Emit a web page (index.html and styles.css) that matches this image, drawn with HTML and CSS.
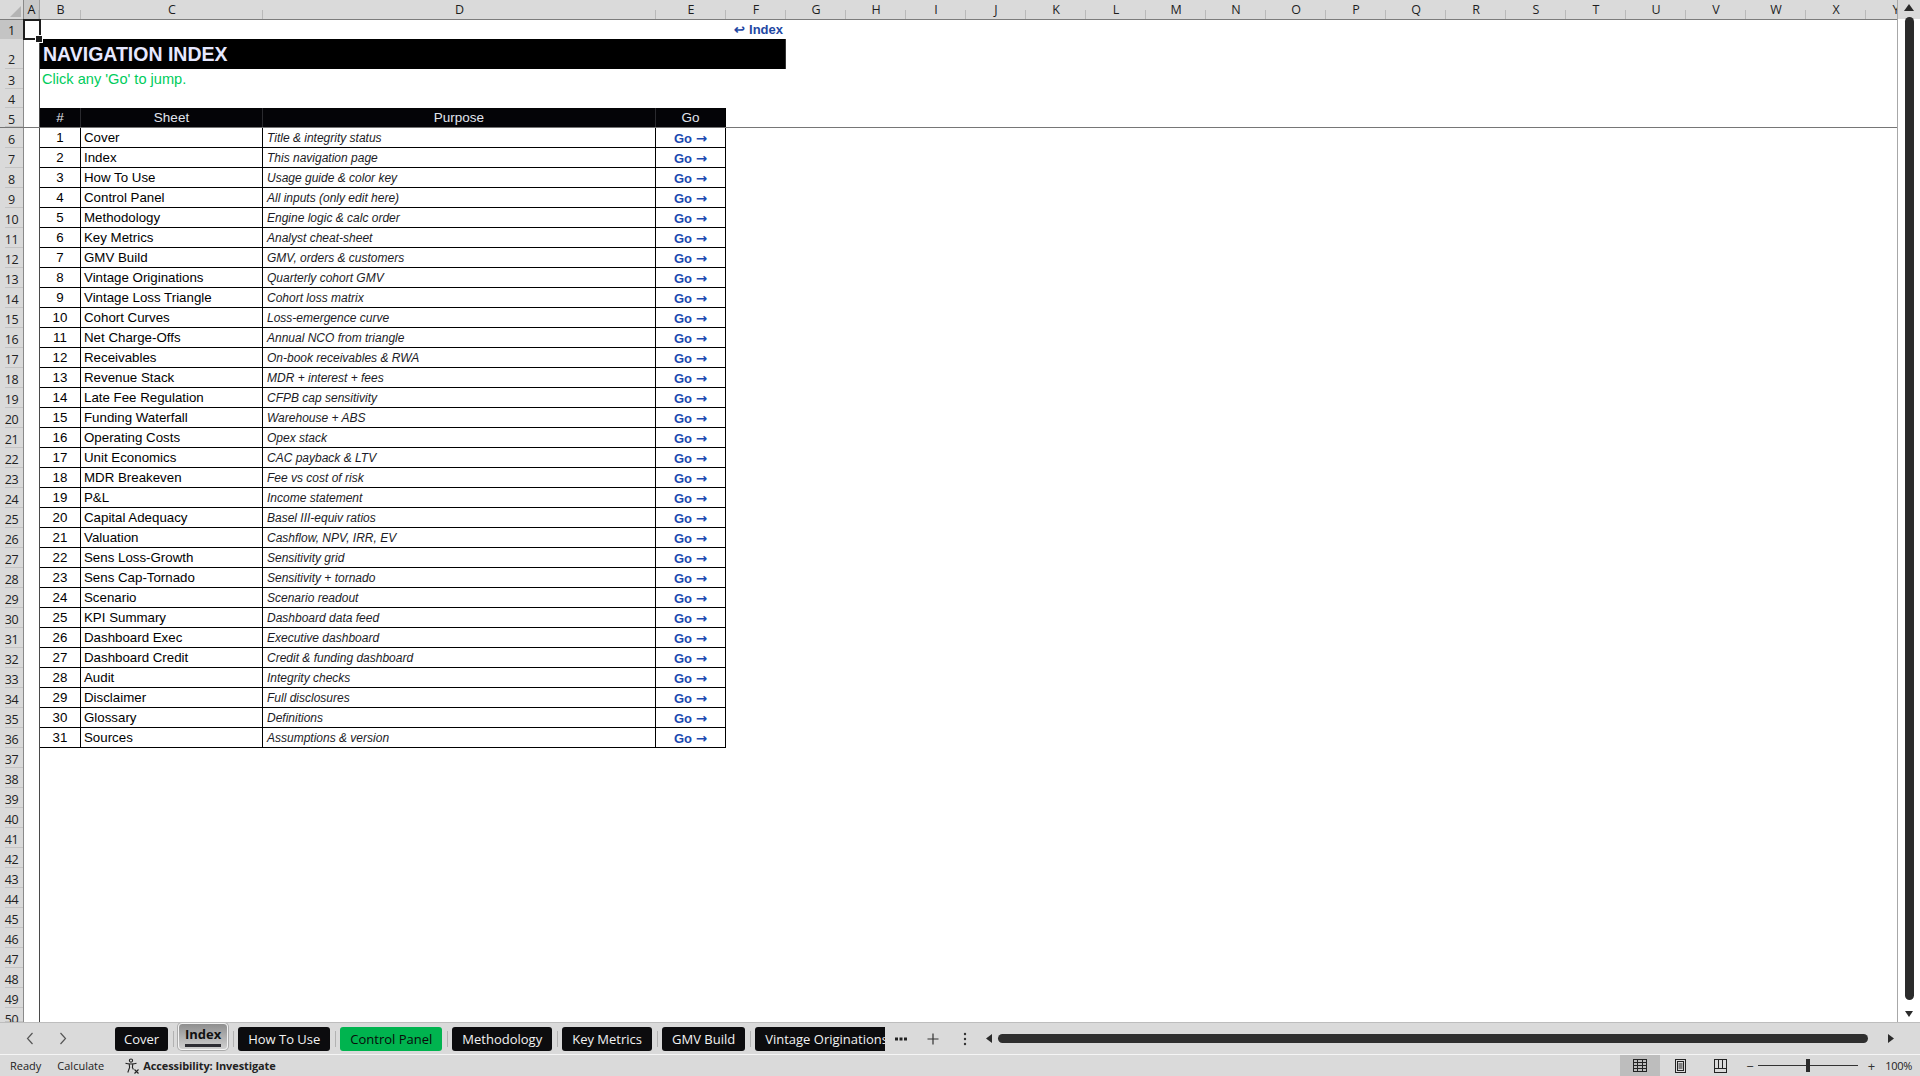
FILE: index.html
```html
<!DOCTYPE html>
<html lang="en">
<head>
<meta charset="utf-8">
<title>Navigation Index</title>
<link rel="stylesheet" href="styles.css">
</head>
<body>
<div class="app">
  <div class="main">
    <div class="sheet">
      <div class="colhdr">
        <div class="ch corner"><svg width="24" height="19" viewBox="0 0 24 19"><polygon points="10,17 21,17 21,6" fill="#b4b4b4"/></svg></div>
        <div class="ch w-a selcol">A</div>
        <div class="ch w-b">B</div>
        <div class="ch w-c">C</div>
        <div class="ch w-d">D</div>
        <div class="ch w-e">E</div>
        <div class="ch w-x">F</div><div class="ch w-x">G</div><div class="ch w-x">H</div><div class="ch w-x">I</div><div class="ch w-x">J</div>
        <div class="ch w-x">K</div><div class="ch w-x">L</div><div class="ch w-x">M</div><div class="ch w-x">N</div><div class="ch w-x">O</div>
        <div class="ch w-x">P</div><div class="ch w-x">Q</div><div class="ch w-x">R</div><div class="ch w-x">S</div><div class="ch w-x">T</div>
        <div class="ch w-x">U</div><div class="ch w-x">V</div><div class="ch w-x">W</div><div class="ch w-x">X</div><div class="ch w-x">Y</div>
      </div>

      <div class="r h19"><div class="rn selrow">1</div><div class="ca sel"></div><div class="backlink">↩ Index</div></div>
      <div class="r h30"><div class="rn rn-bottom">2</div><div class="ca"></div><div class="title">NAVIGATION INDEX</div></div>
      <div class="r"><div class="rn">3</div><div class="ca"></div><div class="hint">Click any 'Go' to jump.</div></div>
      <div class="r h19"><div class="rn">4</div><div class="ca"></div></div>
      <div class="r freeze"><div class="rn">5</div><div class="ca"></div><div class="hd w-b">#</div><div class="hd w-c">Sheet</div><div class="hd w-d">Purpose</div><div class="hd w-e last">Go</div></div>

      <div class="r"><div class="rn">6</div><div class="ca"></div><div class="t num">1</div><div class="t nm">Cover</div><div class="t pp">Title &amp; integrity status</div><div class="t go">Go <span class="arr">→</span></div></div>
      <div class="r"><div class="rn">7</div><div class="ca"></div><div class="t num">2</div><div class="t nm">Index</div><div class="t pp">This navigation page</div><div class="t go">Go <span class="arr">→</span></div></div>
      <div class="r"><div class="rn">8</div><div class="ca"></div><div class="t num">3</div><div class="t nm">How To Use</div><div class="t pp">Usage guide &amp; color key</div><div class="t go">Go <span class="arr">→</span></div></div>
      <div class="r"><div class="rn">9</div><div class="ca"></div><div class="t num">4</div><div class="t nm">Control Panel</div><div class="t pp">All inputs (only edit here)</div><div class="t go">Go <span class="arr">→</span></div></div>
      <div class="r"><div class="rn">10</div><div class="ca"></div><div class="t num">5</div><div class="t nm">Methodology</div><div class="t pp">Engine logic &amp; calc order</div><div class="t go">Go <span class="arr">→</span></div></div>
      <div class="r"><div class="rn">11</div><div class="ca"></div><div class="t num">6</div><div class="t nm">Key Metrics</div><div class="t pp">Analyst cheat-sheet</div><div class="t go">Go <span class="arr">→</span></div></div>
      <div class="r"><div class="rn">12</div><div class="ca"></div><div class="t num">7</div><div class="t nm">GMV Build</div><div class="t pp">GMV, orders &amp; customers</div><div class="t go">Go <span class="arr">→</span></div></div>
      <div class="r"><div class="rn">13</div><div class="ca"></div><div class="t num">8</div><div class="t nm">Vintage Originations</div><div class="t pp">Quarterly cohort GMV</div><div class="t go">Go <span class="arr">→</span></div></div>
      <div class="r"><div class="rn">14</div><div class="ca"></div><div class="t num">9</div><div class="t nm">Vintage Loss Triangle</div><div class="t pp">Cohort loss matrix</div><div class="t go">Go <span class="arr">→</span></div></div>
      <div class="r"><div class="rn">15</div><div class="ca"></div><div class="t num">10</div><div class="t nm">Cohort Curves</div><div class="t pp">Loss-emergence curve</div><div class="t go">Go <span class="arr">→</span></div></div>
      <div class="r"><div class="rn">16</div><div class="ca"></div><div class="t num">11</div><div class="t nm">Net Charge-Offs</div><div class="t pp">Annual NCO from triangle</div><div class="t go">Go <span class="arr">→</span></div></div>
      <div class="r"><div class="rn">17</div><div class="ca"></div><div class="t num">12</div><div class="t nm">Receivables</div><div class="t pp">On-book receivables &amp; RWA</div><div class="t go">Go <span class="arr">→</span></div></div>
      <div class="r"><div class="rn">18</div><div class="ca"></div><div class="t num">13</div><div class="t nm">Revenue Stack</div><div class="t pp">MDR + interest + fees</div><div class="t go">Go <span class="arr">→</span></div></div>
      <div class="r"><div class="rn">19</div><div class="ca"></div><div class="t num">14</div><div class="t nm">Late Fee Regulation</div><div class="t pp">CFPB cap sensitivity</div><div class="t go">Go <span class="arr">→</span></div></div>
      <div class="r"><div class="rn">20</div><div class="ca"></div><div class="t num">15</div><div class="t nm">Funding Waterfall</div><div class="t pp">Warehouse + ABS</div><div class="t go">Go <span class="arr">→</span></div></div>
      <div class="r"><div class="rn">21</div><div class="ca"></div><div class="t num">16</div><div class="t nm">Operating Costs</div><div class="t pp">Opex stack</div><div class="t go">Go <span class="arr">→</span></div></div>
      <div class="r"><div class="rn">22</div><div class="ca"></div><div class="t num">17</div><div class="t nm">Unit Economics</div><div class="t pp">CAC payback &amp; LTV</div><div class="t go">Go <span class="arr">→</span></div></div>
      <div class="r"><div class="rn">23</div><div class="ca"></div><div class="t num">18</div><div class="t nm">MDR Breakeven</div><div class="t pp">Fee vs cost of risk</div><div class="t go">Go <span class="arr">→</span></div></div>
      <div class="r"><div class="rn">24</div><div class="ca"></div><div class="t num">19</div><div class="t nm">P&amp;L</div><div class="t pp">Income statement</div><div class="t go">Go <span class="arr">→</span></div></div>
      <div class="r"><div class="rn">25</div><div class="ca"></div><div class="t num">20</div><div class="t nm">Capital Adequacy</div><div class="t pp">Basel III-equiv ratios</div><div class="t go">Go <span class="arr">→</span></div></div>
      <div class="r"><div class="rn">26</div><div class="ca"></div><div class="t num">21</div><div class="t nm">Valuation</div><div class="t pp">Cashflow, NPV, IRR, EV</div><div class="t go">Go <span class="arr">→</span></div></div>
      <div class="r"><div class="rn">27</div><div class="ca"></div><div class="t num">22</div><div class="t nm">Sens Loss-Growth</div><div class="t pp">Sensitivity grid</div><div class="t go">Go <span class="arr">→</span></div></div>
      <div class="r"><div class="rn">28</div><div class="ca"></div><div class="t num">23</div><div class="t nm">Sens Cap-Tornado</div><div class="t pp">Sensitivity + tornado</div><div class="t go">Go <span class="arr">→</span></div></div>
      <div class="r"><div class="rn">29</div><div class="ca"></div><div class="t num">24</div><div class="t nm">Scenario</div><div class="t pp">Scenario readout</div><div class="t go">Go <span class="arr">→</span></div></div>
      <div class="r"><div class="rn">30</div><div class="ca"></div><div class="t num">25</div><div class="t nm">KPI Summary</div><div class="t pp">Dashboard data feed</div><div class="t go">Go <span class="arr">→</span></div></div>
      <div class="r"><div class="rn">31</div><div class="ca"></div><div class="t num">26</div><div class="t nm">Dashboard Exec</div><div class="t pp">Executive dashboard</div><div class="t go">Go <span class="arr">→</span></div></div>
      <div class="r"><div class="rn">32</div><div class="ca"></div><div class="t num">27</div><div class="t nm">Dashboard Credit</div><div class="t pp">Credit &amp; funding dashboard</div><div class="t go">Go <span class="arr">→</span></div></div>
      <div class="r"><div class="rn">33</div><div class="ca"></div><div class="t num">28</div><div class="t nm">Audit</div><div class="t pp">Integrity checks</div><div class="t go">Go <span class="arr">→</span></div></div>
      <div class="r"><div class="rn">34</div><div class="ca"></div><div class="t num">29</div><div class="t nm">Disclaimer</div><div class="t pp">Full disclosures</div><div class="t go">Go <span class="arr">→</span></div></div>
      <div class="r"><div class="rn">35</div><div class="ca"></div><div class="t num">30</div><div class="t nm">Glossary</div><div class="t pp">Definitions</div><div class="t go">Go <span class="arr">→</span></div></div>
      <div class="r"><div class="rn">36</div><div class="ca"></div><div class="t num">31</div><div class="t nm">Sources</div><div class="t pp">Assumptions &amp; version</div><div class="t go">Go <span class="arr">→</span></div></div>

      <div class="r"><div class="rn">37</div><div class="ca"></div></div>
      <div class="r"><div class="rn">38</div><div class="ca"></div></div>
      <div class="r"><div class="rn">39</div><div class="ca"></div></div>
      <div class="r"><div class="rn">40</div><div class="ca"></div></div>
      <div class="r"><div class="rn">41</div><div class="ca"></div></div>
      <div class="r"><div class="rn">42</div><div class="ca"></div></div>
      <div class="r"><div class="rn">43</div><div class="ca"></div></div>
      <div class="r"><div class="rn">44</div><div class="ca"></div></div>
      <div class="r"><div class="rn">45</div><div class="ca"></div></div>
      <div class="r"><div class="rn">46</div><div class="ca"></div></div>
      <div class="r"><div class="rn">47</div><div class="ca"></div></div>
      <div class="r"><div class="rn">48</div><div class="ca"></div></div>
      <div class="r"><div class="rn">49</div><div class="ca"></div></div>
      <div class="r r-last"><div class="rn">50</div><div class="ca"></div></div>
    </div>
    <div class="vscroll">
      <svg class="varrow" width="10" height="7" viewBox="0 0 10 7"><polygon points="0,7 5,0 10,7" fill="#2b2b2b"/></svg>
      <div class="vthumb"></div>
      <svg class="varrow down" width="8" height="6" viewBox="0 0 8 6"><polygon points="0,0 8,0 4,6" fill="#2b2b2b"/></svg>
    </div>
  </div>

  <div class="tabbar">
    <div class="tabnav">
      <svg width="8" height="13" viewBox="0 0 8 13"><polyline points="6.5,1 1.5,6.5 6.5,12" fill="none" stroke="#555" stroke-width="1.2"/></svg>
      <svg width="8" height="13" viewBox="0 0 8 13"><polyline points="1.5,1 6.5,6.5 1.5,12" fill="none" stroke="#555" stroke-width="1.2"/></svg>
    </div>
    <div class="tabs">
      <div class="tab">Cover</div>
      <div class="tsep"></div>
      <div class="tab active"><span>Index</span></div>
      <div class="tsep"></div>
      <div class="tab">How To Use</div>
      <div class="tsep"></div>
      <div class="tab green">Control Panel</div>
      <div class="tsep"></div>
      <div class="tab">Methodology</div>
      <div class="tsep"></div>
      <div class="tab">Key Metrics</div>
      <div class="tsep"></div>
      <div class="tab">GMV Build</div>
      <div class="tsep"></div>
      <div class="tab">Vintage Originations</div>
    </div>
    <div class="tabtools">
      <span class="tt"><svg width="12" height="4" viewBox="0 0 12 4"><rect x="0" y="0.5" width="3" height="3" fill="#222"/><rect x="4.5" y="0.5" width="3" height="3" fill="#222"/><rect x="9" y="0.5" width="3" height="3" fill="#222"/></svg></span>
      <span class="tt"><svg width="12" height="12" viewBox="0 0 12 12"><path d="M6 0.5V11.5M0.5 6H11.5" stroke="#333" stroke-width="1.2"/></svg></span>
      <span class="tt"><svg width="4" height="14" viewBox="0 0 4 14"><circle cx="2" cy="2" r="1.2" fill="#333"/><circle cx="2" cy="7" r="1.2" fill="#333"/><circle cx="2" cy="12" r="1.2" fill="#333"/></svg></span>
    </div>
    <div class="hscroll">
      <svg width="6" height="9" viewBox="0 0 6 9"><polygon points="6,0 0,4.5 6,9" fill="#2b2b2b"/></svg>
      <div class="hthumb"></div>
      <svg width="6" height="9" viewBox="0 0 6 9"><polygon points="0,0 6,4.5 0,9" fill="#2b2b2b"/></svg>
    </div>
  </div>

  <div class="status">
    <span class="st-ready">Ready</span>
    <span class="st-calc">Calculate</span>
    <span class="st-acc">
      <svg width="16" height="16" viewBox="0 0 16 16" fill="none" stroke="#222" stroke-width="1.1">
        <circle cx="7" cy="2.6" r="1.6"/>
        <path d="M1.5 5.2 C4 6.2 10 6.2 12.5 5.2"/>
        <path d="M5.2 6 L5.6 9.5 L3.8 14.5"/>
        <path d="M8.8 6 L8.4 9.5 L9.4 11.5"/>
        <path d="M10.5 11.5 L14.5 15.5 M14.5 11.5 L10.5 15.5"/>
      </svg>
      <b>Accessibility: Investigate</b>
    </span>
    <div class="st-right">
      <span class="vbtn on">
        <svg width="14" height="13" viewBox="0 0 14 13" fill="none" stroke="#222" stroke-width="1"><rect x="0.5" y="0.5" width="13" height="12"/><path d="M0.5 3.5H13.5M0.5 6.5H13.5M0.5 9.5H13.5M4.5 0.5V12.5M9.5 0.5V12.5"/></svg>
      </span>
      <span class="vbtn">
        <svg width="11" height="14" viewBox="0 0 11 14" fill="none" stroke="#222" stroke-width="1"><rect x="0.5" y="0.5" width="10" height="13"/><rect x="2.5" y="2.5" width="6" height="9"/><path d="M3.5 5H7.5M3.5 7H7.5M3.5 9H7.5"/></svg>
      </span>
      <span class="vbtn">
        <svg width="13" height="14" viewBox="0 0 13 14" fill="none" stroke="#222" stroke-width="1"><rect x="0.5" y="0.5" width="12" height="13"/><path d="M0.5 9.5H12.5M4.5 0.5V9.5M8.5 0.5V9.5"/></svg>
      </span>
      <span class="zm">−</span>
      <span class="zslider"><span class="zthumb"></span></span>
      <span class="zm">+</span>
      <span class="zpct">100%</span>
    </div>
  </div>
</div>
</body>
</html>
```

FILE: styles.css
```css
* { box-sizing: border-box; }

body {
  margin: 0;
  width: 1920px;
  height: 1076px;
  overflow: hidden;
  background: #ffffff;
  font-family: "Liberation Sans", Arial, sans-serif;
  color: #000;
}

.app {
  display: flex;
  flex-direction: column;
  height: 1076px;
}

.main {
  display: flex;
  height: 1022px;
  flex: none;
}

/* ---------- sheet ---------- */
.sheet {
  width: 1898px;
  height: 1022px;
  overflow: hidden;
  display: flex;
  flex-direction: column;
  border-right: 1px solid #a8a8a8;
}

.colhdr {
  display: flex;
  flex: none;
  height: 20px;
  background: #dadada;
  border-bottom: 1px solid #7c7c7c;
}

.ch {
  flex: none;
  height: 19px;
  line-height: 20px;
  text-align: center;
  font-family: "Open Sans", "Noto Sans", sans-serif;
  font-size: 12.5px;
  color: #1e1e1e;
  background-image: linear-gradient(#b9b9b9, #b9b9b9);
  background-size: 1px 9px;
  background-position: right bottom;
  background-repeat: no-repeat;
}

.corner {
  width: 24px;
  border-right: 1px solid #8a8a8a;
  background-image: none;
}
.corner svg { display: block; }

.w-a { width: 16px; }
.w-b { width: 41px; }
.w-c { width: 182px; }
.w-d { width: 393px; }
.w-e { width: 70px; }
.w-x { width: 60px; }

.selcol {
  background-color: #c9c9c9;
  color: #111;
  border-right: 1px solid #a0a0a0;
}

.r {
  display: flex;
  flex: none;
  height: 20px;
}
.r.h19 { height: 19px; }
.r.h30 { height: 30px; }
.r.freeze {
  border-bottom: 1px solid #767676;
  width: 1898px;
}
.r.r-last { overflow: hidden; flex: 1 1 auto; min-height: 0; }

.rn {
  flex: none;
  width: 24px;
  height: 100%;
  border-right: 1px solid #8a8a8a;
  background-color: #dadada;
  background-image: linear-gradient(#c4c4c4, #c4c4c4);
  background-size: 18px 1px;
  background-position: right bottom;
  background-repeat: no-repeat;
  font-family: "Open Sans", "Noto Sans", sans-serif;
  font-size: 12.5px;
  padding-top: 2px;
  line-height: 19px;
  text-align: center;
  color: #222;
  letter-spacing: -0.3px;
}
.r.h19 .rn { padding-top: 1px; }
.rn-bottom { padding-top: 12px; line-height: 18px; }
.selrow { background-color: #c4c4c4; color: #111; }

.ca {
  flex: none;
  width: 16px;
  height: 100%;
  border-right: 1px solid #4a4a4a;
}

.sel {
  position: relative;
  outline: 2px solid #1e1e1e;
  outline-offset: -1px;
  z-index: 2;
}
.sel::after {
  content: "";
  position: absolute;
  right: -4px;
  bottom: -4px;
  width: 6px;
  height: 6px;
  background: #1e1e1e;
  border: 1px solid #fff;
}

.backlink {
  flex: none;
  width: 746px;
  text-align: right;
  padding-right: 3px;
  font-weight: bold;
  font-size: 13px;
  line-height: 19px;
  color: #1f48a3;
}

.title {
  flex: none;
  width: 746px;
  height: 30px;
  background: #000;
  color: #e6e8ff;
  font-weight: bold;
  font-size: 19.5px;
  line-height: 30px;
  padding-left: 3px;
  border-right: 1px solid #333;
}

.hint {
  flex: none;
  padding-left: 2px;
  font-size: 14.6px;
  line-height: 20px;
  color: #00cc5c;
}

.hd {
  flex: none;
  height: 19px;
  background: #040407;
  color: #e1e4ee;
  font-size: 13.5px;
  line-height: 20px;
  text-align: center;
  border-right: 1px solid #2a2a2e;
}
.hd.last { border-right: 1px solid #000; }

.t {
  flex: none;
  height: 20px;
  border-right: 1px solid #000;
  border-bottom: 1px solid #000;
  line-height: 20px;
  white-space: nowrap;
  overflow: hidden;
}
.num { width: 41px; text-align: center; font-size: 13.3px; }
.nm { width: 182px; padding-left: 3px; font-size: 13.3px; }
.pp { width: 393px; padding-left: 4px; font-size: 12px; font-style: italic; color: #1c1c26; }
.go { width: 70px; text-align: center; font-size: 13px; font-weight: bold; color: #1a49b0; }
.arr { font-family: "DejaVu Sans", sans-serif; font-size: 13.5px; font-weight: bold; }

/* ---------- vertical scrollbar ---------- */
.vscroll {
  width: 22px;
  height: 1022px;
  flex: none;
  display: flex;
  flex-direction: column;
  align-items: center;
  background: linear-gradient(#dadada 0, #dadada 19px, #ffffff 19px);
}
.varrow { margin-top: 4px; flex: none; }
.vthumb {
  width: 9px;
  height: 983px;
  margin-top: 6px;
  border-radius: 5px;
  background: #2b2b2b;
  flex: none;
}
.varrow.down { margin-top: 11px; }

/* ---------- tab bar ---------- */
.tabbar {
  height: 32px;
  flex: none;
  display: flex;
  align-items: center;
  background: #dadada;
  border-top: 1px solid #bdbdbd;
  font-family: "Open Sans", "Noto Sans", sans-serif;
}

.tabnav {
  width: 115px;
  flex: none;
  display: flex;
  align-items: center;
  gap: 25px;
  padding-left: 26px;
}
.tabnav svg { display: block; }

.tabs {
  width: 770px;
  flex: none;
  display: flex;
  align-items: center;
  overflow: hidden;
  height: 100%;
}

.tab {
  flex: none;
  height: 24px;
  line-height: 24px;
  padding: 0 10px;
  border-radius: 3px;
  background: #0c0c0e;
  color: #f2f2f2;
  font-size: 13px;
  white-space: nowrap;
}
.tab:first-child { padding: 0 9px; }
.tab.green { background: #00b44f; color: #0a0a0a; }
.tab.active {
  align-self: flex-start;
  height: 27px;
  width: 50px;
  padding: 0;
  text-align: center;
  border-radius: 4px;
  background: linear-gradient(#8f8f8f, #cfcfcf);
  border: 1px solid #f4f4f4;
  box-shadow: 0 0 0 1px #ababab;
  color: #111;
  font-weight: bold;
  line-height: 20px;
}
.tab.active span {
  display: inline-block;
  line-height: 19px;
  border-bottom: 3px solid #2d2d33;
}

.tsep {
  flex: none;
  width: 1px;
  height: 16px;
  margin: 0 4px 0 5px;
  background: #b2b2b2;
}

.tabtools {
  flex: none;
  display: flex;
  align-items: center;
}
.tt {
  width: 32px;
  display: flex;
  align-items: center;
  justify-content: center;
}
.tt svg { display: block; }

.hscroll {
  flex: none;
  display: flex;
  align-items: center;
  width: 918px;
  padding-left: 5px;
}
.hscroll svg { display: block; flex: none; }
.hthumb {
  width: 870px;
  height: 9px;
  margin: 0 20px 0 6px;
  border-radius: 5px;
  background: #2e2e2e;
  flex: none;
}

/* ---------- status bar ---------- */
.status {
  height: 22px;
  flex: none;
  display: flex;
  align-items: center;
  background: #dadada;
  border-top: 1px solid #f5f5f5;
  font-family: "Open Sans", "Noto Sans", sans-serif;
  font-size: 11px;
  color: #222;
}
.st-ready { margin-left: 10px; }
.st-calc { margin-left: 16px; }
.st-acc {
  margin-left: 20px;
  display: flex;
  align-items: center;
  gap: 3px;
}
.st-acc svg { display: block; }
.st-acc b { letter-spacing: -0.1px; }

.st-right {
  margin-left: auto;
  display: flex;
  align-items: center;
  height: 100%;
}
.vbtn {
  width: 40px;
  height: 100%;
  display: flex;
  align-items: center;
  justify-content: center;
}
.vbtn.on { background: #bdbdbd; }
.vbtn svg { display: block; }
.zm { margin-left: 6px; font-size: 13px; color: #333; }
.zslider {
  width: 100px;
  height: 1px;
  margin: 0 4px;
  background: #333;
  display: flex;
  align-items: center;
  justify-content: center;
}
.zthumb {
  width: 4px;
  height: 13px;
  background: #2a2a2a;
  flex: none;
}
.zpct { margin-left: 10px; margin-right: 8px; font-size: 11px; letter-spacing: -0.3px; }
```
